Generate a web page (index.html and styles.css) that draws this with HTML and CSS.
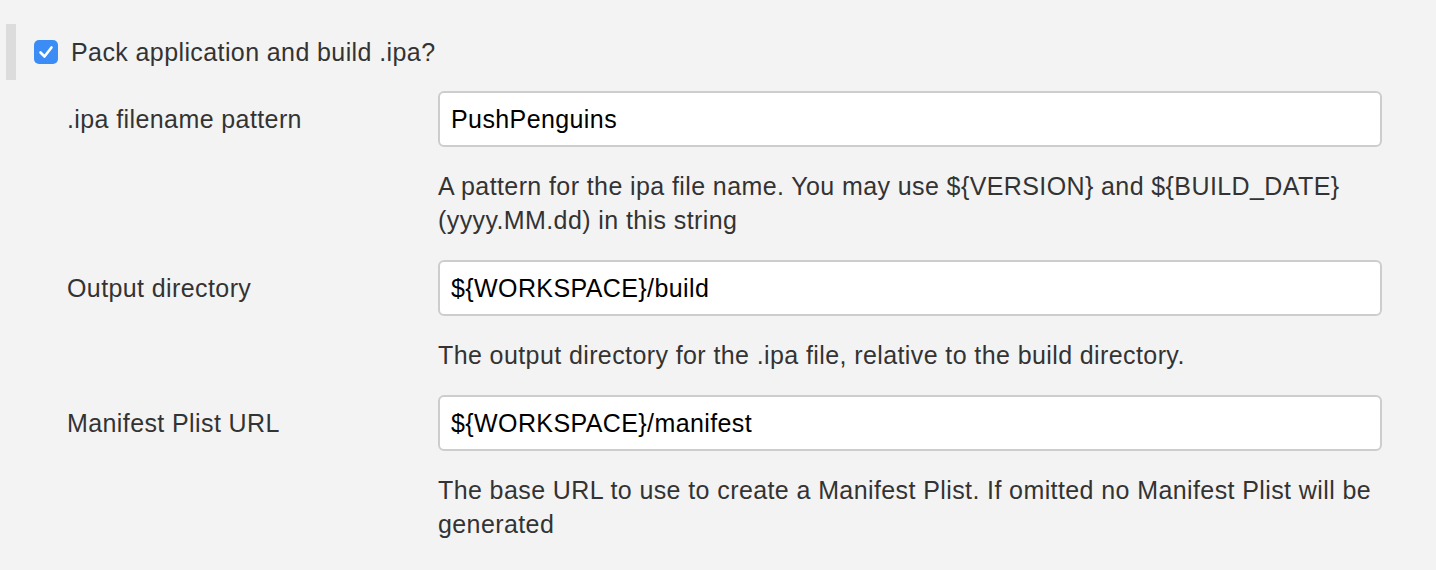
FILE: index.html
```html
<!DOCTYPE html>
<html>
<head>
<meta charset="utf-8">
<link rel="stylesheet" href="styles.css">
</head>
<body>
<div class="page">
  <div class="section-head">
    <span class="checkbox" role="checkbox" aria-checked="true">
      <svg viewBox="0 0 24 24" width="24" height="24"><path d="M6.5 12.5 L10.5 16.5 L17.5 7.5" fill="none" stroke="#fff" stroke-width="2.6" stroke-linecap="round" stroke-linejoin="round"/></svg>
    </span>
    <label class="head-label">Pack application and build .ipa?</label>
  </div>
  <div class="form">
    <div class="label">.ipa filename pattern</div>
    <div class="field"><input class="input" type="text" value="PushPenguins"></div>
    <div></div>
    <div class="help">A pattern for the ipa file name. You may use ${VERSION} and ${BUILD_DATE} (yyyy.MM.dd) in this string</div>

    <div class="label">Output directory</div>
    <div class="field"><input class="input" type="text" value="${WORKSPACE}/build"></div>
    <div></div>
    <div class="help">The output directory for the .ipa file, relative to the build directory.</div>

    <div class="label">Manifest Plist URL</div>
    <div class="field"><input class="input" type="text" value="${WORKSPACE}/manifest"></div>
    <div></div>
    <div class="help">The base URL to use to create a Manifest Plist. If omitted no Manifest Plist will be generated</div>
  </div>
</div>
</body>
</html>
```

FILE: styles.css
```css
html, body {
  margin: 0;
  padding: 0;
  background: #f3f3f3;
  font-family: "Liberation Sans", Arial, Helvetica, sans-serif;
  color: #333;
  letter-spacing: 0.4px;
}
.page {
  padding-top: 24px;
}
.section-head {
  display: flex;
  align-items: center;
  margin-left: 6px;
  height: 56px;
  border-left: 10px solid #dcdcdc;
}
.checkbox {
  display: inline-flex;
  width: 24px;
  height: 24px;
  margin-left: 18px;
  background: #3b8df5;
  border-radius: 5px;
  align-items: center;
  justify-content: center;
}
.head-label {
  margin-left: 13px;
  font-size: 25px;
  color: #333;
}
.form {
  display: grid;
  grid-template-columns: 371px 1fr;
  padding: 11px 54px 0 67px;
}
.label {
  display: flex;
  align-items: center;
  font-size: 25px;
  color: #333;
}
.field {
  display: flex;
}
.input {
  box-sizing: border-box;
  width: 100%;
  height: 56px;
  border: 2px solid #cdcdcd;
  border-radius: 6px;
  background: #fff;
  padding: 0 11px;
  font-family: "Liberation Sans", Arial, Helvetica, sans-serif;
  font-size: 25px;
  letter-spacing: 0.4px;
  color: #000;
  outline: none;
}
.help {
  font-size: 25px;
  line-height: 34px;
  color: #333;
  margin: 22px 0 23px;
}
```
